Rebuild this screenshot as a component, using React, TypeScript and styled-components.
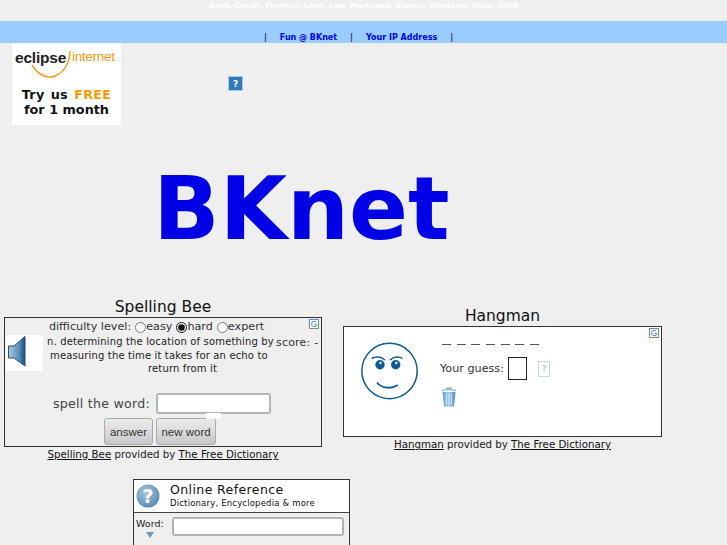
import React from "react";
import styled, { createGlobalStyle } from "styled-components";

const GlobalStyle = createGlobalStyle`
  html, body {
    margin: 0;
    height: 545px;
    overflow: hidden;
    background: #efefef;
    font-family: "DejaVu Sans", sans-serif;
    color: #222;
  }
`;

const Keywords = styled.div`
  height: 21px;
  padding-top: 1px;
  box-sizing: border-box;
  text-align: center;
  color: #fff;
  font-size: 7.35px;
  font-weight: bold;
  line-height: 10px;
`;

const NavBar = styled.nav`
  height: 22px;
  background: #99ccff;
  display: flex;
  justify-content: center;
  align-items: flex-end;
  gap: 13px;
  box-sizing: border-box;
  padding-right: 10px;
  font-size: 8px;
  line-height: 10px;
  font-weight: bold;
`;

const NavSep = styled.span`
  color: #1a237e;
`;

const NavLink = styled.a`
  color: #0000ee;
`;

const TopRow = styled.div`
  display: flex;
  height: 82px;
  padding-left: 12px;
`;

const Ad = styled.div`
  width: 109px;
  height: 82px;
  background: #fff;
  position: relative;
  overflow: hidden;
`;

const AdBrand = styled.div`
  position: absolute;
  top: 6px;
  left: 3px;
  font: bold 15.5px "Liberation Sans", sans-serif;
  letter-spacing: -0.2px;
  color: #222;
`;

const AdNet = styled.div`
  position: absolute;
  top: 6px;
  left: 60px;
  font: 13.5px "Liberation Sans", sans-serif;
  letter-spacing: -0.3px;
  color: #f79a12;
`;

const AdSwoosh = styled.svg`
  position: absolute;
  top: 0;
  left: 0;
`;

const AdOffer = styled.div`
  position: absolute;
  top: 44px;
  left: 0;
  right: 0;
  text-align: center;
  font: bold 12.8px/15px "DejaVu Sans", sans-serif;
  color: #111;

  b {
    color: #ff9900;
  }
`;

const AdOfferLead = styled.span`
  word-spacing: 1.5px;
  letter-spacing: 0.25px;
`;

const HelpIcon = styled.svg`
  margin: 33px 0 0 107px;
`;

const Title = styled.h1`
  margin: 0;
  height: 173px;
  text-align: center;
  padding-right: 124px;
  font-size: 87px;
  line-height: 168px;
  font-weight: bold;
  color: #0000e6;
`;

const Games = styled.div`
  display: flex;
  align-items: flex-start;
  padding-left: 4px;
  gap: 21px;
`;

const Game = styled.section<{ $offset?: number; $width: number }>`
  width: ${(p) => p.$width}px;
  margin-top: ${(p) => p.$offset ?? 0}px;
  text-align: center;
`;

const GameTitle = styled.h2`
  margin: 0;
  font-size: 15.5px;
  line-height: 18px;
  padding-bottom: 1px;
  font-weight: 500;
  color: #111;
`;

const Frame = styled.div<{ $white?: boolean; $height: number }>`
  position: relative;
  box-sizing: border-box;
  height: ${(p) => p.$height}px;
  border: 1px solid #333;
  background: ${(p) => (p.$white ? "#fff" : "#efefef")};
`;

const Badge = styled.svg`
  position: absolute;
  top: 1px;
  right: 2px;
`;

const Credit = styled.p`
  margin: 0;
  font-size: 10.25px;
  line-height: 15px;
  color: #222;

  a {
    color: #111;
    text-decoration: underline;
  }
`;

const LevelRow = styled.div`
  display: flex;
  justify-content: center;
  align-items: center;
  height: 17px;
  padding-right: 9px;
  font-size: 11.2px;
  color: #333;
`;

const LevelLabel = styled.span`
  margin-right: 4px;
`;

const Radio = styled.input.attrs({ type: "radio" })`
  margin: 1px 0 0 0;
  width: 11px;
  height: 11px;
  accent-color: #111;
`;

const LevelName = styled.span`
  margin-right: 4px;
`;

const WordRow = styled.div`
  display: flex;
  height: 57px;
`;

const Speaker = styled.div`
  width: 37px;
  height: 36px;
  background: #fff;
  flex: none;
  margin-left: 1px;

  svg {
    display: block;
    margin: 1px 0 0 2px;
  }
`;

const Definition = styled.div`
  width: 229px;
  font-size: 10px;
  line-height: 13.5px;
  letter-spacing: 0.15px;
  color: #222;
  margin-left: 4px;
  flex: none;
  text-align: left;
  white-space: nowrap;
`;

const DefLine = styled.div<{ $indent?: number }>`
  padding-left: ${(p) => p.$indent ?? 0}px;
`;

const Score = styled.div`
  font-size: 11px;
  white-space: nowrap;
  letter-spacing: 0.2px;
  line-height: 15px;
  color: #333;
`;

const AnswerRow = styled.div`
  display: flex;
  justify-content: center;
  align-items: center;
  gap: 6px;
  font-size: 12.6px;
  color: #444;
  padding-right: 2px;
  height: 22px;
  letter-spacing: 0.25px;
`;

const SpellInput = styled.input`
  box-sizing: border-box;
  width: 115px;
  height: 21px;
  border: 2px solid #b4b4b4;
  border-radius: 3px;
  background: #fff;
  padding: 0;
  outline: none;
`;

const Patch = styled.div`
  position: absolute;
  top: 95px;
  left: 201px;
  width: 15px;
  height: 6px;
  background: #fff;
`;

const ButtonRow = styled.div`
  display: flex;
  justify-content: center;
  gap: 3px;
  margin-top: 4px;
  padding-right: 6px;
`;

const Button = styled.button<{ $width: number }>`
  box-sizing: border-box;
  width: ${(p) => p.$width}px;
  height: 27px;
  padding: 0;
  border: 1px solid #aaa;
  border-radius: 3px;
  background: linear-gradient(#ececec, #c8c8cc);
  color: #333;
  font: 11.5px "Liberation Sans", "DejaVu Sans", sans-serif;
`;

const HangLayout = styled.div`
  display: flex;
`;

const Face = styled.svg`
  margin: 15px 0 0 17px;
  flex: none;
`;

const HangMain = styled.div`
  margin-left: 21px;
  text-align: left;
`;

const Blanks = styled.div`
  display: flex;
  gap: 5.7px;
  margin: 17px 0 0 2px;
`;

const Blank = styled.span`
  width: 9px;
  height: 1px;
  background: #555;
`;

const GuessRow = styled.div`
  display: flex;
  align-items: center;
  margin-top: 12px;
  font-size: 11.2px;
  color: #333;
`;

const GuessBox = styled.input`
  box-sizing: border-box;
  width: 19px;
  height: 23px;
  margin-left: 4px;
  padding: 0;
  border: 1px solid #222;
  background: #fff;
  outline: none;
`;

const Hint = styled.svg`
  margin-left: 11px;
`;

const Trash = styled.svg`
  display: block;
  margin: 7px 0 0 1px;
`;

const Reference = styled.section`
  box-sizing: border-box;
  width: 217px;
  height: 90px;
  margin: 17px 0 0 133px;
  border: 1px solid #333;
`;

const RefHead = styled.div`
  display: flex;
  height: 33px;
  background: #fff;
  border-bottom: 1px solid #444;
  box-sizing: border-box;
`;

const RefIcon = styled.svg`
  margin: 4px 0 0 2px;
  flex: none;
`;

const RefText = styled.div`
  margin-left: 10px;
  color: #111;
`;

const RefName = styled.div`
  font-size: 12.5px;
  line-height: 12px;
  margin-top: 4px;
  font-weight: 500;
  letter-spacing: 0.4px;
`;

const RefSub = styled.div`
  font-size: 8.5px;
  line-height: 10px;
  margin-top: 2px;
  letter-spacing: 0.18px;
`;

const RefBody = styled.div`
  display: flex;
  padding: 4px 0 0 2px;
`;

const WordLabel = styled.div`
  width: 31px;
  margin-top: 1px;
  font-size: 9.5px;
  line-height: 12px;
  color: #222;
  text-align: center;
  padding-right: 4px;
  box-sizing: border-box;

  svg {
    display: block;
    margin: 2px auto 0;
  }
`;

const RefInput = styled.input`
  box-sizing: border-box;
  width: 172px;
  height: 19px;
  margin: 0 0 0 5px;
  border: 2px solid #b4b4b4;
  border-radius: 3px;
  background: #fff;
  padding: 0;
  outline: none;
`;

const GoogleBadge = () => (
  <Badge width="10" height="10" viewBox="0 0 10 10">
    <rect x="0.5" y="0.5" width="9" height="9" fill="#fff" stroke="#5b8ad8" />
    <path d="M9.5 .5V9.5H5" fill="none" stroke="#5aa65a" />
    <path d="M.5 9.5H5" fill="none" stroke="#d9694f" />
    <path d="M7.2 3C6 1.8 2.6 2 2.6 5S6 8.2 7.2 7V5.2H5.2" fill="none" stroke="#6d93d6" strokeWidth="1.1" />
  </Badge>
);

export default function App() {
  return (
    <>
      <GlobalStyle />
      <Keywords>Bank, Credit, Finance, Loan, Law, Mortgage, Shares, Windows, Vista, 2008</Keywords>
      <NavBar>
        <NavSep>|</NavSep>
        <NavLink>Fun @ BKnet</NavLink>
        <NavSep>|</NavSep>
        <NavLink>Your IP Address</NavLink>
        <NavSep>|</NavSep>
      </NavBar>
      <TopRow>
        <Ad>
          <AdBrand>eclipse</AdBrand>
          <AdSwoosh width="109" height="40" viewBox="0 0 109 40">
            <path d="M20 22C27 33 36 36 43 33C53 29 58 18 58 8" fill="none" stroke="#f79a12" strokeWidth="1.4" />
          </AdSwoosh>
          <AdNet>internet</AdNet>
          <AdOffer>
            <AdOfferLead>
              Try us <b>FREE</b>
            </AdOfferLead>
            <br />
            for 1 month
          </AdOffer>
        </Ad>
        <HelpIcon width="15" height="15" viewBox="0 0 15 15">
          <rect x="0.5" y="0.5" width="14" height="14" fill="#2f7abd" stroke="#a9c7e6" />
          <text x="7.5" y="11" textAnchor="middle" fontSize="9" fontWeight="bold" fill="#fff" fontFamily="DejaVu Sans">?</text>
        </HelpIcon>
      </TopRow>
      <Title>BKnet</Title>
      <Games>
        <Game $width={318}>
          <GameTitle>Spelling Bee</GameTitle>
          <Frame $height={130}>
            <GoogleBadge />
            <LevelRow>
              <LevelLabel>difficulty level:</LevelLabel>
              <Radio name="level" />
              <LevelName>easy</LevelName>
              <Radio name="level" defaultChecked />
              <LevelName>hard</LevelName>
              <Radio name="level" />
              <LevelName>expert</LevelName>
            </LevelRow>
            <WordRow>
              <Speaker>
                <svg width="18" height="31" viewBox="0 0 18 31">
                  <defs>
                    <linearGradient id="spk" x1="0" x2="1" y1="0" y2="0">
                      <stop offset="0" stopColor="#a8c8dc" />
                      <stop offset="0.6" stopColor="#5f93bd" />
                      <stop offset="1" stopColor="#174d80" />
                    </linearGradient>
                  </defs>
                  <path d="M.5 10H6L17 .5V30L6 22H.5Z" fill="url(#spk)" stroke="#1c4f80" />
                </svg>
              </Speaker>
              <Definition>
                <DefLine>n. determining the location of something by</DefLine>
                <DefLine $indent={3}>measuring the time it takes for an echo to</DefLine>
                <DefLine $indent={101}>return from it</DefLine>
              </Definition>
              <Score>score: -</Score>
            </WordRow>
            <AnswerRow>
              spell the word:
              <SpellInput />
            </AnswerRow>
            <Patch />
            <ButtonRow>
              <Button $width={49}>answer</Button>
              <Button $width={60}>new word</Button>
            </ButtonRow>
          </Frame>
          <Credit>
            <a>Spelling Bee</a> provided by <a>The Free Dictionary</a>
          </Credit>
        </Game>
        <Game $width={319} $offset={9}>
          <GameTitle>Hangman</GameTitle>
          <Frame $white $height={111}>
            <GoogleBadge />
            <HangLayout>
              <Face width="58" height="58" viewBox="0 0 58 58">
                <g fill="none" stroke="#0f5a94" strokeWidth="1.5">
                  <circle cx="28.5" cy="29" r="27.7" />
                  <path d="M10.7 16.5C14 14.5 20 14 24 18M29 18C33 14 39 14.5 41.3 16.5" />
                  <path d="M16 40.5C21 47 31 47 36.7 43" strokeWidth="1.8" />
                </g>
                <circle cx="19" cy="22.7" r="4.7" fill="#0f5a94" />
                <circle cx="34.7" cy="22.7" r="4.7" fill="#0f5a94" />
                <circle cx="19.5" cy="21" r="1.2" fill="#fff" />
                <circle cx="35.2" cy="21" r="1.2" fill="#fff" />
              </Face>
              <HangMain>
                <Blanks>
                  {Array.from({ length: 7 }).map((_, i) => (
                    <Blank key={i} />
                  ))}
                </Blanks>
                <GuessRow>
                  Your guess:
                  <GuessBox />
                  <Hint width="12" height="16" viewBox="0 0 12 16">
                    <rect x="0.5" y="0.5" width="11" height="15" fill="#fff" stroke="#c4d8ea" />
                    <text x="6" y="11" textAnchor="middle" fontSize="8" fontWeight="bold" fill="#b8d0e6" fontFamily="DejaVu Sans">?</text>
                  </Hint>
                </GuessRow>
                <Trash width="16" height="20" viewBox="0 0 16 20">
                  <defs>
                    <linearGradient id="bin" x1="0" x2="1" y1="0" y2="0">
                      <stop offset="0" stopColor="#5f9fdc" />
                      <stop offset="0.5" stopColor="#a8cdee" />
                      <stop offset="1" stopColor="#4a8ccc" />
                    </linearGradient>
                  </defs>
                  <path d="M1 4C4 2 12 2 15 4M6 2.5V1H10V2.5" fill="none" stroke="#9ab4c8" strokeWidth="1.4" />
                  <path d="M1.5 5H14.5L13 19.5H3Z" fill="url(#bin)" />
                  <path d="M5.5 7V17.5M8 7V17.5M10.5 7V17.5" stroke="#e8f2fb" strokeWidth="0.8" />
                </Trash>
              </HangMain>
            </HangLayout>
          </Frame>
          <Credit>
            <a>Hangman</a> provided by <a>The Free Dictionary</a>
          </Credit>
        </Game>
      </Games>
      <Reference>
        <RefHead>
          <RefIcon width="24" height="24" viewBox="0 0 24 24">
            <defs>
              <radialGradient id="ball" cx="0.4" cy="0.35" r="0.75">
                <stop offset="0" stopColor="#a9c4d8" />
                <stop offset="1" stopColor="#4c86b4" />
              </radialGradient>
            </defs>
            <circle cx="12" cy="12" r="11.5" fill="url(#ball)" />
            <text x="12" y="19" textAnchor="middle" fontSize="19" fontWeight="bold" fill="#fff" fontFamily="DejaVu Sans">?</text>
          </RefIcon>
          <RefText>
            <RefName>Online Reference</RefName>
            <RefSub>Dictionary, Encyclopedia &amp; more</RefSub>
          </RefText>
        </RefHead>
        <RefBody>
          <WordLabel>
            Word:
            <svg width="10" height="6" viewBox="0 0 10 6">
              <path d="M1 0H9L5 6Z" fill="#6d97bd" />
            </svg>
          </WordLabel>
          <RefInput />
        </RefBody>
      </Reference>
    </>
  );
}
